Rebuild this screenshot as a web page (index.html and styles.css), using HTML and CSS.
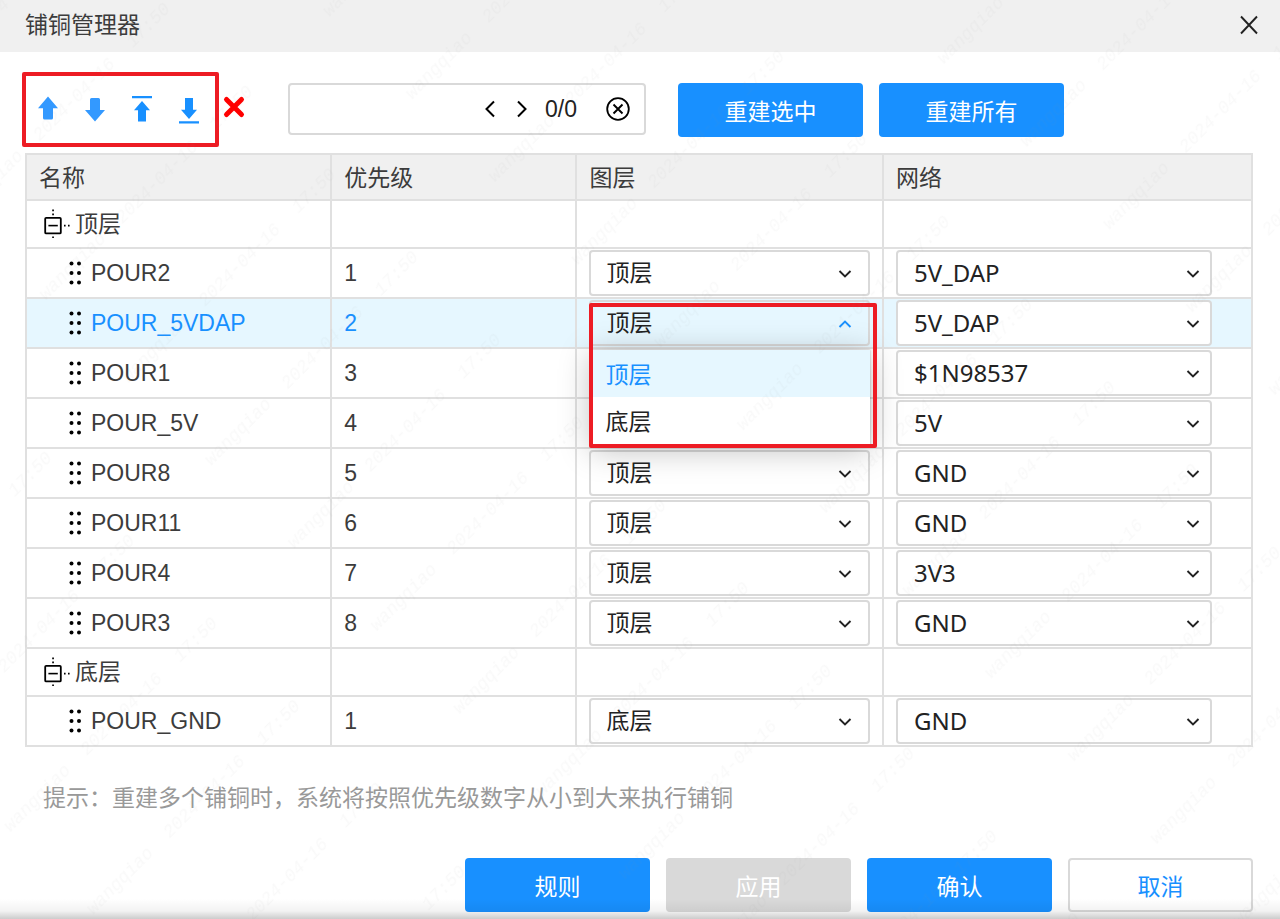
FILE: index.html
```html
<!DOCTYPE html>
<html lang="zh-CN">
<head>
<meta charset="utf-8">
<meta name="viewport" content="width=device-width, initial-scale=1">
<title>铺铜管理器</title>
<link rel="stylesheet" href="styles.css">
</head>
<body>
<svg class="defs" width="0" height="0" aria-hidden="true">
  <symbol id="grip" viewBox="0 0 14 26">
    <circle cx="2.500" cy="3.500" r="2"/><circle cx="10" cy="3.500" r="2"/>
    <circle cx="2.500" cy="13" r="2"/><circle cx="10" cy="13" r="2"/>
    <circle cx="2.500" cy="22.500" r="2"/><circle cx="10" cy="22.500" r="2"/>
  </symbol>
  <symbol id="tree" viewBox="0 0 30 32">
    <rect x="2.200" y="9.800" width="15.600" height="15.600" rx="1" fill="none" stroke="#000" stroke-width="1.800"/>
    <path d="M5.400 17.600h9.400" stroke="#000" stroke-width="1.600"/>
    <path d="M9.200 1.600h1.700v1.700h-1.700zM9.200 5.600h1.700v1.700h-1.700zM9.200 28.400h1.700v1.700h-1.700zM21 16.800h1.600v1.600H21zM25 16.800h1.600v1.600H25z"/>
  </symbol>
  <symbol id="down" viewBox="0 0 14 10">
    <path d="M1.500 2 7 7.400 12.500 2" fill="none" stroke="currentColor" stroke-width="1.900"/>
  </symbol>
</svg>

<main class="dialog">
  <header class="titlebar">
    <h1 class="title">铺铜管理器</h1>
    <button class="icon-btn" type="button" aria-label="关闭">
      <svg width="18" height="20" viewBox="0 0 18 20"><path d="M1 1.500 17 18.500M17 1.500 1 18.500" fill="none" stroke="#222" stroke-width="1.900"/></svg>
    </button>
  </header>

  <div class="toolbar">
    <div class="order-group">
      <button class="icon-btn" type="button" aria-label="上移"><svg width="24" height="32" viewBox="0 0 24 32"><path d="M12 2.500 22 14.200h-5V24q0 1.500-1.500 1.500h-7Q7 25.500 7 24v-9.800H2z" fill="#3399ff"/></svg></button>
      <button class="icon-btn" type="button" aria-label="下移"><svg width="24" height="32" viewBox="0 0 24 32"><path d="M12 27.500 2 16h5V5.500Q7 4 8.500 4h7Q17 4 17 5.500V16h5z" fill="#3399ff"/></svg></button>
      <button class="icon-btn" type="button" aria-label="置顶"><svg width="24" height="32" viewBox="0 0 24 32"><path d="M2 2h20v2.300H2zM12 7l8 9.300h-4V27.500H8V16.300H4z" fill="#1890ff"/></svg></button>
      <button class="icon-btn" type="button" aria-label="置底"><svg width="24" height="32" viewBox="0 0 24 32"><path d="M2 27.300h20v2.300H2zM12 25l8-9.300h-4V4H8v11.700H4z" fill="#1890ff"/></svg></button>
    </div>
    <button class="icon-btn delete" type="button" aria-label="删除"><svg width="24" height="24" viewBox="0 0 24 24"><path d="M4.500 4.500 19.500 19.500M19.500 4.500 4.500 19.500" fill="none" stroke="#f00" stroke-width="5" stroke-linecap="round"/></svg></button>
    <div class="search">
      <input class="search-input" type="text" aria-label="查找">
      <button class="icon-btn" type="button" aria-label="上一个"><svg width="12" height="18" viewBox="0 0 12 18"><path d="M10 1.500 2.500 9 10 16.500" fill="none" stroke="#000" stroke-width="2"/></svg></button>
      <button class="icon-btn" type="button" aria-label="下一个"><svg width="12" height="18" viewBox="0 0 12 18"><path d="M2 1.500 9.500 9 2 16.500" fill="none" stroke="#000" stroke-width="2"/></svg></button>
      <span class="count">0/0</span>
      <button class="icon-btn clear" type="button" aria-label="清除"><svg width="24" height="24" viewBox="0 0 24 24"><circle cx="12" cy="12" r="10.800" fill="none" stroke="#000" stroke-width="1.800"/><path d="M7.500 7.500l9 9M16.500 7.500l-9 9" stroke="#000" stroke-width="1.900"/></svg></button>
    </div>
    <div class="rebuild">
      <button class="btn primary" type="button">重建选中</button>
      <button class="btn primary" type="button">重建所有</button>
    </div>
  </div>

  <div class="content">
    <table class="grid">
      <colgroup><col class="col-name"><col class="col-priority"><col class="col-layer"><col class="col-net"></colgroup>
      <thead>
        <tr><th scope="col">名称</th><th scope="col">优先级</th><th scope="col">图层</th><th scope="col">网络</th></tr>
      </thead>
      <tbody>
        <tr class="group"><td><div class="node"><svg class="tree" width="30" height="32"><use href="#tree"/></svg>顶层</div></td><td></td><td></td><td></td></tr>
        <tr><td><div class="leaf"><svg width="14" height="26"><use href="#grip"/></svg>POUR2</div></td><td>1</td>
          <td><div class="pick"><select aria-label="POUR2 图层"><option>顶层</option><option>底层</option></select><svg class="arrow" width="14" height="10"><use href="#down"/></svg></div></td>
          <td class="net"><div class="pick"><select aria-label="POUR2 网络"><option>5V_DAP</option></select><svg class="arrow" width="14" height="10"><use href="#down"/></svg></div></td></tr>
        <tr class="selected"><td><div class="leaf"><svg width="14" height="26"><use href="#grip"/></svg>POUR_5VDAP</div></td><td>2</td>
          <td><div class="pick open"><select aria-label="POUR_5VDAP 图层"><option>顶层</option><option>底层</option></select><svg class="arrow" width="14" height="10"><use href="#down"/></svg>
            <ul class="menu" role="listbox" aria-label="图层"><li class="option active" role="option" aria-selected="true">顶层</li><li class="option" role="option" aria-selected="false">底层</li></ul>
            <span class="frame"></span></div></td>
          <td class="net"><div class="pick"><select aria-label="POUR_5VDAP 网络"><option>5V_DAP</option></select><svg class="arrow" width="14" height="10"><use href="#down"/></svg></div></td></tr>
        <tr><td><div class="leaf"><svg width="14" height="26"><use href="#grip"/></svg>POUR1</div></td><td>3</td>
          <td></td>
          <td class="net"><div class="pick"><select aria-label="POUR1 网络"><option>$1N98537</option></select><svg class="arrow" width="14" height="10"><use href="#down"/></svg></div></td></tr>
        <tr><td><div class="leaf"><svg width="14" height="26"><use href="#grip"/></svg>POUR_5V</div></td><td>4</td>
          <td></td>
          <td class="net"><div class="pick"><select aria-label="POUR_5V 网络"><option>5V</option></select><svg class="arrow" width="14" height="10"><use href="#down"/></svg></div></td></tr>
        <tr><td><div class="leaf"><svg width="14" height="26"><use href="#grip"/></svg>POUR8</div></td><td>5</td>
          <td><div class="pick"><select aria-label="POUR8 图层"><option>顶层</option><option>底层</option></select><svg class="arrow" width="14" height="10"><use href="#down"/></svg></div></td>
          <td class="net"><div class="pick"><select aria-label="POUR8 网络"><option>GND</option></select><svg class="arrow" width="14" height="10"><use href="#down"/></svg></div></td></tr>
        <tr><td><div class="leaf"><svg width="14" height="26"><use href="#grip"/></svg>POUR11</div></td><td>6</td>
          <td><div class="pick"><select aria-label="POUR11 图层"><option>顶层</option><option>底层</option></select><svg class="arrow" width="14" height="10"><use href="#down"/></svg></div></td>
          <td class="net"><div class="pick"><select aria-label="POUR11 网络"><option>GND</option></select><svg class="arrow" width="14" height="10"><use href="#down"/></svg></div></td></tr>
        <tr><td><div class="leaf"><svg width="14" height="26"><use href="#grip"/></svg>POUR4</div></td><td>7</td>
          <td><div class="pick"><select aria-label="POUR4 图层"><option>顶层</option><option>底层</option></select><svg class="arrow" width="14" height="10"><use href="#down"/></svg></div></td>
          <td class="net"><div class="pick"><select aria-label="POUR4 网络"><option>3V3</option></select><svg class="arrow" width="14" height="10"><use href="#down"/></svg></div></td></tr>
        <tr><td><div class="leaf"><svg width="14" height="26"><use href="#grip"/></svg>POUR3</div></td><td>8</td>
          <td><div class="pick"><select aria-label="POUR3 图层"><option>顶层</option><option>底层</option></select><svg class="arrow" width="14" height="10"><use href="#down"/></svg></div></td>
          <td class="net"><div class="pick"><select aria-label="POUR3 网络"><option>GND</option></select><svg class="arrow" width="14" height="10"><use href="#down"/></svg></div></td></tr>
        <tr class="group"><td><div class="node"><svg class="tree" width="30" height="32"><use href="#tree"/></svg>底层</div></td><td></td><td></td><td></td></tr>
        <tr><td><div class="leaf"><svg width="14" height="26"><use href="#grip"/></svg>POUR_GND</div></td><td>1</td>
          <td><div class="pick"><select aria-label="POUR_GND 图层"><option>底层</option><option>顶层</option></select><svg class="arrow" width="14" height="10"><use href="#down"/></svg></div></td>
          <td class="net"><div class="pick"><select aria-label="POUR_GND 网络"><option>GND</option></select><svg class="arrow" width="14" height="10"><use href="#down"/></svg></div></td></tr>
      </tbody>
    </table>
    <p class="hint">提示：重建多个铺铜时，系统将按照优先级数字从小到大来执行铺铜</p>
    <footer class="actions">
      <button class="btn primary" type="button">规则</button>
      <button class="btn disabled" type="button" disabled>应用</button>
      <button class="btn primary" type="button">确认</button>
      <button class="btn plain" type="button">取消</button>
    </footer>
  </div>

  <svg class="watermark" width="100%" height="100%" aria-hidden="true">
    <pattern id="mark" x="-201" y="-50" width="401" height="117" patternUnits="userSpaceOnUse" patternTransform="rotate(-45)" viewBox="-201 -50 401 117">
      <text x="-137" y="11">wangqiao</text>
      <text x="-18" y="11">2024-04-16</text>
      <text x="87" y="11">17:50</text>
    </pattern>
    <rect width="100%" height="100%" fill="url(#mark)"/>
  </svg>
</main>
</body>
</html>
```
FILE: styles.css
```css
* {
  box-sizing: border-box;
}

body {
  margin: 0;
  background: #fff;
  color: #3c3c3c;
  font: 23px/32px "Liberation Sans", "Noto Sans CJK SC", sans-serif;
}

button,
input,
select {
  font: inherit;
}

.defs {
  position: absolute;
}

.dialog {
  position: relative;
  min-height: 100vh;
  overflow: hidden;
}

/* Edge shade along the bottom of the dialog */
.dialog::after {
  content: "";
  position: absolute;
  inset: auto 0 0;
  height: 20px;
  background: linear-gradient(rgba(0, 0, 0, 0), rgba(0, 0, 0, 0.05) 60%, rgba(0, 0, 0, 0.2));
  pointer-events: none;
}

.titlebar {
  display: flex;
  align-items: center;
  justify-content: space-between;
  height: 52px;
  padding: 0 22px 2px 25px;
  background: #f0f0f0;
}

.title {
  margin: 0;
  font-size: 23px;
  font-weight: 400;
}

.icon-btn {
  display: flex;
  flex: none;
  padding: 0;
  border: 0;
  background: none;
}

.toolbar {
  display: flex;
  align-items: center;
  padding: 20px 28px 6px 22px;
}

.order-group {
  display: flex;
  flex: none;
  align-items: center;
  gap: 23px;
  height: 75px;
  padding: 0 14px 0 10px;
  border: 4px solid #ed1c24;
  border-radius: 2px;
}

.delete {
  margin: 0 42px 6px 3px;
}

.search {
  display: flex;
  flex: 0 1 358px;
  align-items: center;
  min-width: 200px;
  height: 52px;
  margin-bottom: 2px;
  padding-right: 14px;
  border: 2px solid #d9d9d9;
  border-radius: 4px;
  color: #222;
}

.search-input {
  flex: 1;
  min-width: 0;
  height: 100%;
  padding: 0 12px;
  border: 0;
  outline: 0;
  background: none;
}

.search .icon-btn + .icon-btn {
  margin-left: 20px;
}

.count {
  margin: 0 29px 0 17px;
}

.rebuild,
.actions {
  display: flex;
  gap: 16px;
}

.rebuild {
  margin-left: 32px;
}

.btn {
  width: 185px;
  height: 54px;
  padding: 4px 0 0;
  border: 0;
  border-radius: 4px;
  white-space: nowrap;
}

.primary {
  background: #1890ff;
  color: #fff;
}

.disabled {
  background: #d9d9d9;
  color: #fff;
}

.plain {
  border: 2px solid #d9d9d9;
  background: #fff;
  color: #1890ff;
}

.content {
  padding: 0 27px 7px 25px;
}

.grid {
  width: 100%;
  table-layout: fixed;
  border-collapse: collapse;
}

.col-name {
  width: 24.9%;
}

.col-priority {
  width: 20%;
}

.col-layer {
  width: 25%;
}

th,
td {
  height: 50px;
  padding: 0 12px;
  border: 2px solid #e0e0e0;
  text-align: left;
}

th {
  height: 46px;
  padding-top: 2px;
  background: #f0f0f0;
  font-weight: 400;
}

.group td {
  height: 48px;
}

.node,
.leaf {
  display: flex;
  align-items: center;
}

.node {
  gap: 2px;
  padding-left: 4px;
}

.leaf {
  gap: 8px;
  padding-left: 30px;
}

.selected td {
  background: #e6f7ff;
  color: #1890ff;
}

.net {
  padding-right: 39px;
}

.pick {
  position: relative;
}

.pick select {
  display: block;
  width: 100%;
  height: 46px;
  padding: 0 40px 0 15px;
  border: 2px solid #d9d9d9;
  border-radius: 4px;
  appearance: none;
  background: none;
  color: #222;
}

.net select {
  padding-left: 16px;
  background: #fff;
  font-family: "Noto Sans", "Noto Sans CJK SC", sans-serif;
  font-size: 24px;
}

.arrow {
  position: absolute;
  top: 19px;
  right: 18px;
  color: #222;
  pointer-events: none;
}

.net .arrow {
  right: 12px;
}

.open .arrow {
  color: #1890ff;
  transform: rotate(180deg);
}

.menu {
  position: absolute;
  z-index: 1;
  top: 50px;
  left: 2px;
  right: 0;
  margin: 0;
  padding: 0 0 2px;
  background: #fff;
  box-shadow: 0 0 2px rgba(0, 0, 0, 0.3), 0 4px 32px rgba(0, 0, 0, 0.25);
  list-style: none;
}

.option {
  padding: 9px 14px 6px;
  color: #222;
}

.active {
  background: #e6f7ff;
  color: #1890ff;
}

.frame {
  position: absolute;
  z-index: 2;
  top: 3px;
  left: 0;
  right: -7px;
  height: 145px;
  border: 4px solid #ed1c24;
  border-radius: 2px;
  pointer-events: none;
}

.hint {
  margin: 35px 18px 44px;
  color: #999;
}

.actions {
  justify-content: flex-end;
}

.watermark {
  position: absolute;
  z-index: 3;
  inset: 0;
  fill: #808080;
  font: italic 18px "Liberation Mono", monospace;
  text-anchor: middle;
  pointer-events: none;
}

.watermark text {
  opacity: 0.05;
}
```
